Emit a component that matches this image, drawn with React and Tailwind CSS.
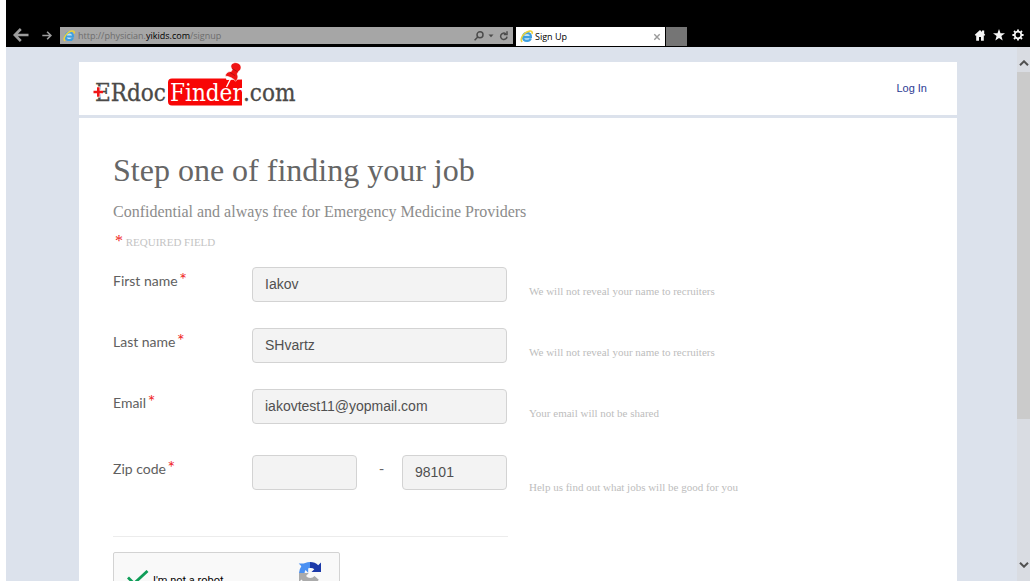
import React from "react";

function IeIcon({ className }) {
  return (
    <svg viewBox="0 0 24 24" className={className} aria-hidden="true">
      <path d="M5 13.200h15.200c.3-5-2.800-8-7-8-4.500 0-7.800 3.200-7.800 7.600 0 4.500 3.300 7.400 7.800 7.400 3.200 0 5.600-1.500 6.700-4.200" fill="#bfe2f8" stroke="#3fa0e0" strokeWidth="4" />
      <path d="M4 22C0 18.500 3.500 10.500 10 5.500 15 1.800 21.500.5 22.500 4c.2 1-.1 2-.6 3" fill="none" stroke="#ecd23c" strokeWidth="3" />
    </svg>
  );
}

function Arrow({ className, width }) {
  return (
    <svg viewBox="0 0 16 14" className={className} fill="none" stroke="currentColor" strokeWidth={width} aria-hidden="true">
      <path d="M15.500 7H1.800M7.800 1 1.800 7l6 6" />
    </svg>
  );
}

function BrowserBar() {
  return (
    <header className="flex h-[47px] shrink-0 items-start bg-black pt-[27px] font-['Open_Sans','Noto_Sans',sans-serif]">
      <div className="flex h-4 w-[54px] shrink-0 items-center justify-between pr-2 pl-[7px] text-[#9c9c9c]">
        <button type="button" aria-label="Back">
          <Arrow className="h-[14px] w-4" width="2.6" />
        </button>
        <button type="button" aria-label="Forward">
          <Arrow className="h-[9px] w-[10px] rotate-180" width="2.6" />
        </button>
      </div>
      <div className="flex h-[17px] w-[453px] items-center bg-[#a6a6a6] pr-1 pl-[3px] text-[#4c4c4c]">
        <IeIcon className="size-3 shrink-0" />
        <div className="ml-[3px] flex-1 text-[9px] leading-4 text-[#6d6d6d]">
          http://physician.<span className="text-black">yikids.com</span>/signup
        </div>
        <button type="button" aria-label="Search" className="mr-1">
          <svg viewBox="0 0 10 10" className="size-[10px]" fill="none" stroke="currentColor" strokeWidth="1.500">
            <circle cx="6" cy="3.800" r="3" />
            <path d="M3.800 6 .6 9.300" />
          </svg>
        </button>
        <button type="button" aria-label="Show address list" className="mr-[5px]">
          <svg viewBox="0 0 6 4" className="h-1 w-[6px]" fill="currentColor">
            <path d="M.5.5h5L3 3.300z" />
          </svg>
        </button>
        <button type="button" aria-label="Refresh">
          <svg viewBox="0 0 10 10" className="size-[10px]" fill="none" stroke="currentColor" strokeWidth="1.500">
            <path d="M6.800 2.800A3.200 3.200 0 1 0 8 5.600" />
            <path d="M8 .3v3.200H4.800" />
          </svg>
        </button>
      </div>
      <div className="ml-[3px] flex h-[19px] w-[149px] items-center bg-white pr-1 pl-1 text-black">
        <IeIcon className="size-[13px] shrink-0" />
        <span className="ml-0.5 flex-1 text-[9px] leading-4">Sign Up</span>
        <button type="button" aria-label="Close tab">
          <svg viewBox="0 0 8 8" className="size-2" stroke="#9a9a9a" strokeWidth="1.400">
            <path d="m1.300 1.300 5.400 5.400M6.700 1.300 1.300 6.700" />
          </svg>
        </button>
      </div>
      <button type="button" aria-label="New tab" className="ml-px h-[19px] w-[21px] bg-[#757575]" />
      <div className="ml-auto flex h-4 items-center gap-[7px] pr-[6px] text-[#f4f4f4]">
        <button type="button" aria-label="Home">
          <svg viewBox="0 0 12 12" className="size-3" fill="currentColor">
            <path d="M6 1 .8 5.800l.8 1 .6-.4V11.800h2.800V8h2v3.800h2.800V6.400l.6.4.8-1-1-1V1.500H8v1.400z" />
          </svg>
        </button>
        <button type="button" aria-label="Favorites">
          <svg viewBox="0 0 12 12" className="size-3" fill="currentColor">
            <path d="m6 0 1.500 4.300H12L8.400 7l1.300 4.600L6 8.900l-3.700 2.700L3.600 7 0 4.300h4.500z" />
          </svg>
        </button>
        <button type="button" aria-label="Tools">
          <svg viewBox="0 0 12 12" className="size-3" fill="none" stroke="currentColor">
            <circle cx="6" cy="6" r="3.300" strokeWidth="1.700" />
            <path strokeWidth="1.900" d="M6 .4v1.800M6 9.800v1.800M.4 6h1.800M9.800 6h1.800M2 2l1.300 1.300M8.700 8.700 10 10M10 2 8.700 3.300M3.300 8.700 2 10" />
          </svg>
        </button>
      </div>
    </header>
  );
}

function Logo() {
  return (
    <svg viewBox="0 0 210 44" className="h-11 w-[210px]" role="img" aria-label="ERdocFinder.com">
      <g fontFamily="'DejaVu Serif Condensed','DejaVu Serif',serif" fontSize="24">
        <text x="4" y="39" fill="#4b4a48" stroke="#4b4a48" strokeWidth=".3">ERdoc</text>
        <path d="M81 16.500H135l.5 1.500L151 17.500V43.500H81q-4 0-4-4V20.500q0-4 4-4z" fill="#f80606" />
        <text x="79" y="39" fill="#fff">Finder</text>
        <text x="152" y="39" fill="#4b4a48" stroke="#4b4a48" strokeWidth=".3">.com</text>
      </g>
      <path d="M2 30h10M7.300 24.500v11" stroke="#fff" strokeWidth="4.500" />
      <path d="M2.500 30h9.500M7.300 25.300v9.500" stroke="#f01616" strokeWidth="2.600" />
      <path d="m135.500 25 4-8" stroke="#fff" strokeWidth="1.400" />
      <path d="M140.500 2.500c2-2.500 6.500-2.500 8.600.2 1.600 2.300 1 5.300-1.300 6.500l-1.700 2.800c1.600 2.600.8 5.300-1.500 7.300-1.800-2.600-7-5.400-10.400-5 .4-3 2.800-5 6-4.800l1.300-2.200c-1.700-1.300-2.100-3.300-1-4.800z" fill="#f01414" stroke="#fff" strokeWidth=".6" />
      <path d="m141 6.500 5.500 3.200M139 10.500l5 3" stroke="#a90d0d" strokeWidth=".8" fill="none" />
    </svg>
  );
}

const inputClass =
  "h-[35px] w-full min-w-0 rounded-[4px] border border-[#d3d3d3] bg-[#f3f3f3] px-3 pb-0.5 font-['Liberation_Sans',sans-serif] text-sm text-[#505050] outline-none";

function Row({ id, label, hint, zip, children }) {
  return (
    <div className={zip ? "flex min-h-[40px]" : "flex"}>
      <label htmlFor={id} className="w-[139px] shrink-0 pt-0.5 font-['Lato',sans-serif] text-sm leading-5 text-[#606060]">
        {label} <span className="-ml-0.5 text-lg leading-5 text-[#f01e1e]">*</span>
      </label>
      <div className="w-[255px] shrink-0">{children}</div>
      <p className={zip ? "ml-[22px] pt-6 text-[11px] leading-4 text-[#bdbdbd]" : "ml-[22px] pt-4 text-[11px] leading-4 text-[#bdbdbd]"}>{hint}</p>
    </div>
  );
}

function Captcha() {
  return (
    <div className="mt-[15px] flex h-[60px] w-[227px] items-start rounded-[2px] border border-[#d3d3d3] bg-[#f9f9f9] pl-[13px]">
      <svg viewBox="0 0 22 16" className="mt-[17px] h-4 w-[22px]" fill="none" stroke="#0f9d58" strokeWidth="2.800" role="img" aria-label="Verified">
        <path d="M1 7.500 7 13.500 20.500 1" />
      </svg>
      <span className="mt-5 ml-1 font-['Roboto',sans-serif] text-[11px] leading-4 text-black">I'm not a robot</span>
      <svg viewBox="0 0 24 24" className="mt-[8px] mr-[17px] ml-auto size-6" aria-label="reCAPTCHA" role="img">
        <path d="M1 12A11 11 0 0 1 3.400 5.200L.7 2.500h9.500v9.300L7.500 9a5 5 0 0 0-.9 3z" fill="#4a90f2" />
        <path d="M3.400 5.200A11 11 0 0 1 12 1v6c-2 0-3.400.7-4.500 2z" fill="#4a90f2" />
        <path d="M12 1a11 11 0 0 1 8.200 3.300L23 1.500V11h-9.500l2.800-2.700A5 5 0 0 0 12 7z" fill="#1c3aa9" />
        <path d="M1 12v9l2.500-2.400A11 11 0 0 0 20.800 18.800L16.500 15A5.500 5.500 0 0 1 8 15l2.800-3z" fill="#ababab" />
      </svg>
    </div>
  );
}

function ScrollBar() {
  return (
    <div className="absolute inset-y-0 right-0 flex w-[13px] flex-col items-center bg-[#d9dce2] text-[#505050]" aria-hidden="true">
      <svg viewBox="0 0 10 6" className="mt-[13px] mb-[6px] h-[6px] w-[10px] shrink-0" fill="none" stroke="currentColor" strokeWidth="2">
        <path d="M1 5.300 5 1.300l4 4" />
      </svg>
      <div className="h-[65%] w-full bg-[#cbcbcb]" />
      <svg viewBox="0 0 10 6" className="mt-auto mb-[13px] h-[6px] w-[10px] shrink-0" fill="none" stroke="currentColor" strokeWidth="2">
        <path d="m1 .7 4 4 4-4" />
      </svg>
    </div>
  );
}

export default function App() {
  return (
    <div className="flex h-screen flex-col bg-white px-[6px] pb-[7px] font-['Liberation_Serif',serif]">
      <BrowserBar />
      <div className="relative min-h-0 flex-1 overflow-hidden bg-[#dce2ec] px-[73px] pt-[15px]">
        <div className="flex h-[53px] items-start justify-between bg-white pr-[30px] pl-3">
          <a href="#home">
            <Logo />
          </a>
          <a href="#login" className="pt-[18px] font-['Liberation_Sans',sans-serif] text-[11px] leading-4 text-[#2b3a94]">
            Log In
          </a>
        </div>
        <main className="mt-[3px] min-h-full bg-white px-[34px] pt-8">
          <h1 className="text-[32px] leading-10 text-[#666]">Step one of finding your job</h1>
          <p className="mt-3 text-base leading-5 text-[#8c8c8c]">Confidential and always free for Emergency Medicine Providers</p>
          <p className="mt-[11px] pl-0.5 text-[11px] leading-4 text-[#c4c4c4]">
            <span className="text-base leading-4 text-[#f01e1e]">*</span> REQUIRED FIELD
          </p>
          <form className="mt-[17px] flex flex-col gap-[26px]" onSubmit={(e) => e.preventDefault()}>
            <Row id="first" label="First name" hint="We will not reveal your name to recruiters">
              <input id="first" className={inputClass} defaultValue="Iakov" />
            </Row>
            <Row id="last" label="Last name" hint="We will not reveal your name to recruiters">
              <input id="last" className={inputClass} defaultValue="SHvartz" />
            </Row>
            <Row id="email" label="Email" hint="Your email will not be shared">
              <input id="email" type="email" className={inputClass} defaultValue="iakovtest11@yopmail.com" />
            </Row>
            <div className="pt-[5px]">
              <Row id="zip" label="Zip code" hint="Help us find out what jobs will be good for you" zip>
                <div className="flex items-start">
                  <div className="w-[105px]">
                    <input id="zip" className={inputClass} defaultValue="" />
                  </div>
                  <span className="flex-1 pt-1 pl-1 text-center text-sm leading-5 text-[#666]">-</span>
                  <div className="w-[105px]">
                    <input aria-label="Zip code, second part" className={inputClass} defaultValue="98101" />
                  </div>
                </div>
              </Row>
            </div>
            <div className="mt-[15px]">
              <hr className="w-[395px] border-[#ececec]" />
              <Captcha />
            </div>
          </form>
        </main>
        <ScrollBar />
      </div>
    </div>
  );
}
